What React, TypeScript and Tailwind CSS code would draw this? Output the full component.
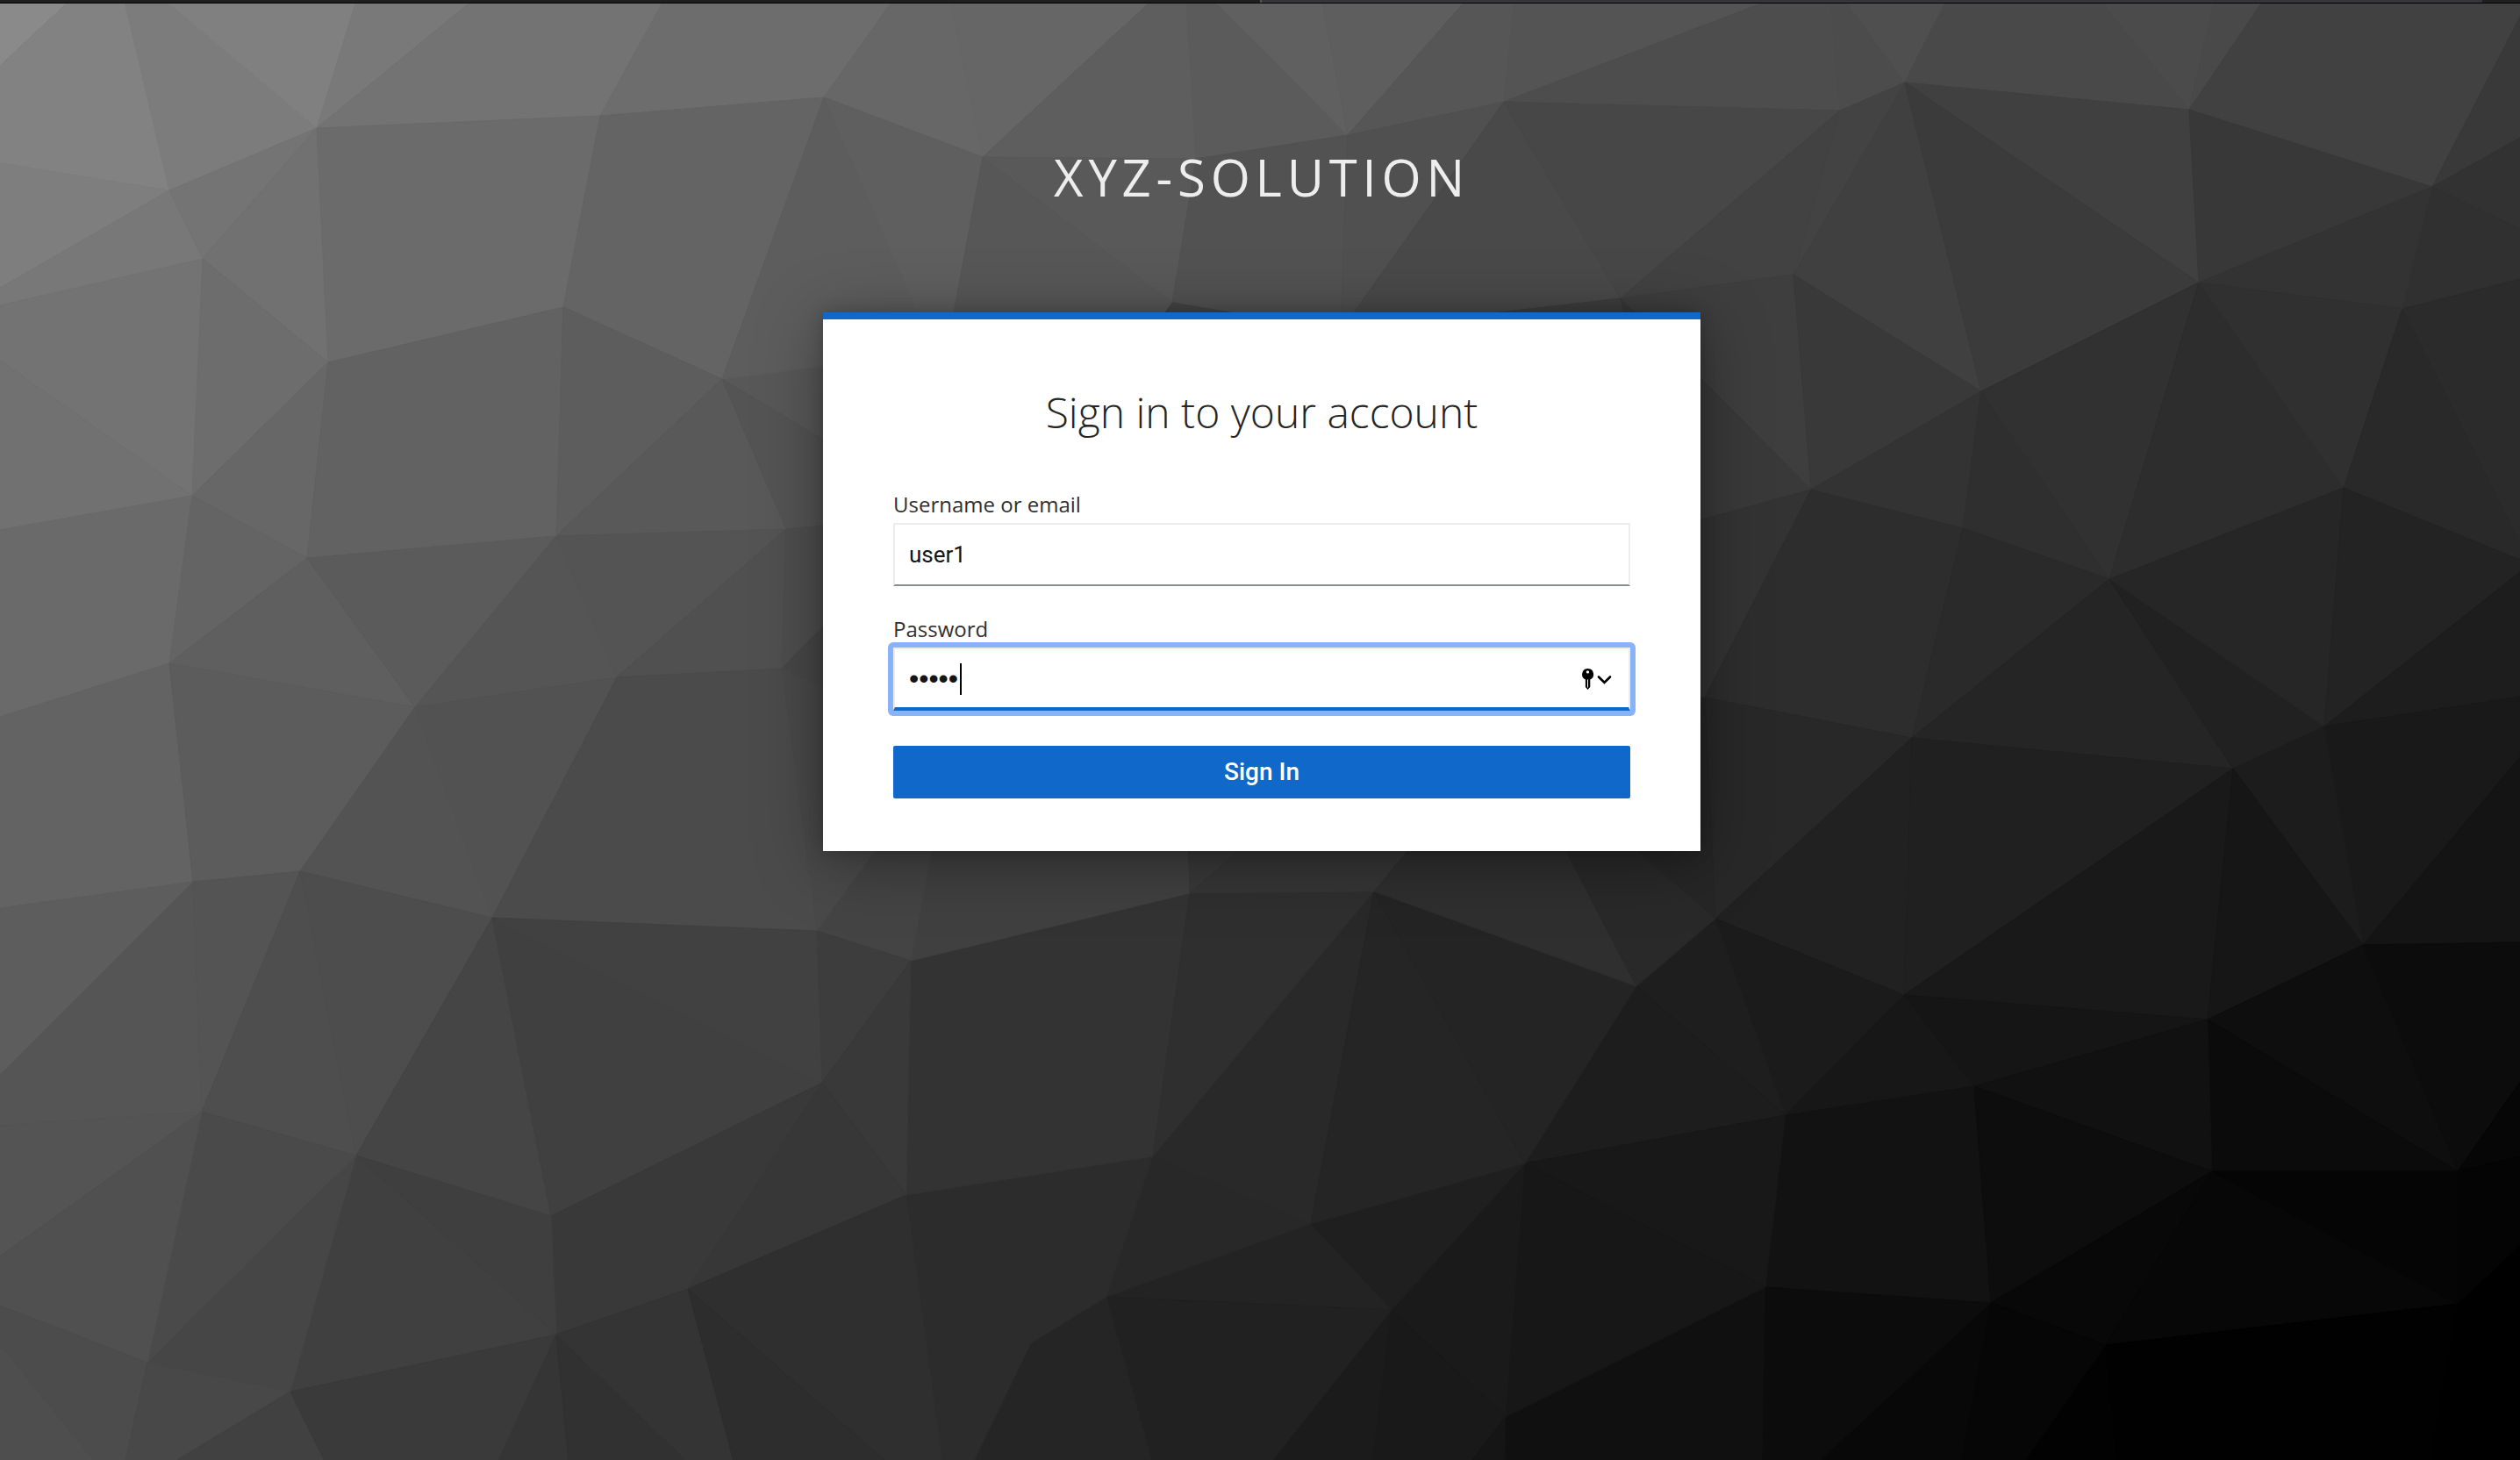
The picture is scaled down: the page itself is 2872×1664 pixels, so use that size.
import React from "react";

type Facet = [fill: string, points: string];

/* Low-poly backdrop: each facet is a flat grey polygon on a 2872 x 1664 canvas. */
const facets: Facet[] = [
  // upper left
  ["#8a8a8a", "0,0 79,0 0,74"],
  ["#828282", "79,0 142,0 193,216 0,185 0,74"],
  ["#7e7e7e", "0,185 193,216 0,327"],
  ["#787878", "0,327 193,216 231,294 0,347"],
  ["#7c7c7c", "142,0 189,0 361,145 193,216"],
  ["#808080", "189,0 406,0 361,145"],
  ["#797979", "406,0 538,0 361,145"],
  ["#737373", "538,0 756,0 684,131 361,145"],
  ["#747474", "193,216 361,145 231,294"],
  ["#717171", "361,145 374,412 231,294"],
  ["#6b6b6b", "361,145 684,131 642,349 374,412"],
  ["#6d6d6d", "756,0 1017,0 939,110 684,131"],
  ["#646464", "684,131 939,110 823,431 642,349"],
  ["#737373", "0,347 231,294 219,564 0,410"],
  ["#717171", "0,410 219,564 0,603"],
  ["#6d6d6d", "231,294 374,412 219,564"],
  ["#676767", "374,412 350,635 219,564"],
  ["#626262", "374,412 642,349 634,610 350,635"],
  ["#5d5d5d", "642,349 823,431 634,610"],
  ["#595959", "823,431 896,602 634,610"],
  ["#6a6a6a", "0,603 219,564 193,755 0,816"],
  ["#646464", "219,564 350,635 193,755"],
  ["#5f5f5f", "350,635 473,805 193,755"],
  ["#5b5b5b", "350,635 634,610 473,805"],
  ["#555555", "634,610 703,771 473,805"],
  ["#545454", "634,610 896,602 703,771"],
  ["#505050", "896,602 891,761 703,771"],
  ["#585858", "823,431 980,396 980,525"],
  ["#545454", "823,431 980,525 980,594 896,602"],
  ["#4e4e4e", "896,602 980,594 980,670 891,761"],
  ["#474747", "891,761 980,670 980,800"],
  // upper middle
  ["#676767", "1017,0 1084,0 1120,178 939,110"],
  ["#666666", "1084,0 1312,0 1120,178"],
  ["#5e5e5e", "1312,0 1352,0 1363,180 1120,178"],
  ["#5b5b5b", "1352,0 1384,0 1536,153 1363,180"],
  ["#606060", "1384,0 1507,0 1536,153"],
  ["#5e5e5e", "1507,0 1670,0 1536,153"],
  ["#565656", "1670,0 1726,0 1714,115 1536,153"],
  ["#545454", "1726,0 2015,0 1714,115"],
  ["#5d5d5d", "939,110 1065,400 823,431"],
  ["#5f5f5f", "939,110 1120,178 1075,420 1065,400"],
  ["#575757", "1120,178 1336,344 1280,420 1075,420"],
  ["#595959", "1120,178 1363,180 1336,344"],
  ["#525252", "1363,180 1536,153 1528,376 1336,344"],
  ["#505050", "1536,153 1714,115 1528,376"],
  ["#494949", "1714,115 1847,339 1528,376"],
  ["#454545", "1336,344 1528,376 1300,400"],
  ["#3e3e3e", "1847,339 1900,602 1528,376"],
  // upper right
  ["#4d4d4d", "2015,0 2087,0 2097,125 1714,115"],
  ["#4c4c4c", "2087,0 2103,0 2171,93 2097,125"],
  ["#4f4f4f", "2103,0 2218,0 2171,93"],
  ["#494949", "2218,0 2394,0 2495,124 2171,93"],
  ["#4b4b4b", "2394,0 2524,0 2495,124"],
  ["#494949", "2524,0 2579,0 2495,124"],
  ["#414141", "2579,0 2872,0 2872,18 2772,212 2495,124"],
  ["#393939", "2872,18 2872,156 2772,212"],
  ["#323232", "2872,156 2872,260 2772,212"],
  ["#303030", "2772,212 2872,260 2872,317 2738,351"],
  ["#404040", "2171,93 2495,124 2506,321"],
  ["#383838", "2495,124 2772,212 2506,321"],
  ["#333333", "2772,212 2738,351 2506,321"],
  ["#434343", "2097,125 2171,93 2044,312"],
  ["#474747", "1714,115 2097,125 1847,339"],
  ["#424242", "2097,125 2044,312 1847,339"],
  ["#404040", "2171,93 2258,445 2044,312"],
  ["#3b3b3b", "2171,93 2506,321 2258,445"],
  ["#3e3e3e", "1847,339 2044,312 2064,557"],
  ["#393939", "2044,312 2258,445 2064,557"],
  ["#393939", "1847,339 2064,557 1900,602"],
  ["#333333", "2258,445 2237,601 2064,557"],
  ["#2f2f2f", "2258,445 2404,659 2237,601"],
  ["#313131", "2258,445 2506,321 2404,659"],
  ["#2d2d2d", "2506,321 2671,555 2404,659"],
  ["#303030", "2506,321 2738,351 2671,555"],
  ["#292929", "2738,351 2872,617 2872,637 2671,555"],
  ["#2b2b2b", "2738,351 2872,317 2872,617"],
  ["#333333", "2064,557 1943,794 1900,794 1900,602"],
  ["#2d2d2d", "2064,557 2237,601 2179,840 1943,794"],
  ["#2a2a2a", "2237,601 2404,659 2179,840"],
  ["#252525", "2404,659 2545,875 2179,840"],
  ["#212121", "2404,659 2649,827 2545,875"],
  ["#262626", "2404,659 2671,555 2649,827"],
  ["#232323", "2671,555 2872,637 2872,651 2649,827"],
  ["#1d1d1d", "2872,651 2872,793 2649,827"],
  // lower right
  ["#191919", "2649,827 2872,793 2872,862 2693,1076"],
  ["#1c1c1c", "2649,827 2693,1076 2545,875"],
  ["#282828", "1943,794 2179,840 1955,1046"],
  ["#262626", "1943,794 1955,1046 1866,970 1850,794"],
  ["#212121", "2179,840 2170,1133 1955,1046"],
  ["#202020", "2179,840 2545,875 2170,1133"],
  ["#191919", "2545,875 2516,1161 2170,1133"],
  ["#161616", "2545,875 2693,1076 2516,1161"],
  ["#141414", "2872,862 2872,1073 2693,1076"],
  ["#0c0c0c", "2693,1076 2872,1073 2872,1232 2801,1334"],
  ["#0e0e0e", "2693,1076 2801,1334 2516,1161"],
  ["#0b0b0b", "2516,1161 2801,1334 2521,1334"],
  ["#1b1b1b", "1955,1046 2170,1133 2035,1270"],
  ["#1e1e1e", "1865,1123 1955,1046 2035,1270"],
  ["#1d1d1d", "1865,1123 2035,1270 1738,1325"],
  ["#171717", "2170,1133 2250,1237 2035,1270"],
  ["#151515", "2170,1133 2516,1161 2250,1237"],
  ["#111111", "2516,1161 2521,1334 2250,1237"],
  ["#121212", "2035,1270 2250,1237 2269,1484 2012,1466"],
  ["#0d0d0d", "2250,1237 2521,1334 2269,1484"],
  ["#080808", "2521,1334 2400,1532 2269,1484"],
  ["#070707", "2521,1334 2801,1485 2400,1532"],
  ["#050505", "2521,1334 2801,1334 2801,1485"],
  ["#060606", "2801,1334 2872,1232 2872,1317"],
  ["#040404", "2801,1334 2872,1317 2872,1418 2801,1485"],
  ["#010101", "2801,1485 2770,1664 2413,1664 2400,1532"],
  ["#020202", "2400,1532 2413,1664 2308,1664"],
  ["#060606", "2269,1484 2400,1532 2308,1664 2235,1664"],
  ["#080808", "2269,1484 2235,1664 2074,1664"],
  ["#0c0c0c", "2012,1466 2269,1484 2074,1664 2008,1664"],
  ["#101010", "2012,1466 2008,1664 1715,1664 1716,1614"],
  // lower middle
  ["#181818", "1738,1325 2035,1270 2012,1466"],
  ["#171717", "1738,1325 2012,1466 1716,1614"],
  ["#1a1a1a", "1738,1325 1716,1614 1586,1492"],
  ["#191919", "1586,1492 1716,1614 1677,1664 1564,1664"],
  ["#151515", "1716,1614 1715,1664 1677,1664"],
  ["#1b1b1b", "1586,1492 1564,1664 1450,1664"],
  ["#1f1f1f", "1494,1394 1738,1325 1586,1492"],
  ["#232323", "1494,1394 1586,1492 1261,1477"],
  ["#212121", "1261,1477 1586,1492 1450,1664 1313,1664"],
  ["#252525", "1261,1477 1313,1664 1110,1664 1175,1530"],
  ["#282828", "1314,1317 1494,1394 1261,1477"],
  ["#292929", "1314,1317 1566,1015 1494,1394"],
  ["#252525", "1566,1015 1738,1325 1494,1394"],
  ["#242424", "1566,1015 1865,1123 1738,1325"],
  ["#2c2c2c", "1033,1361 1314,1317 1261,1477 1175,1530 1110,1664 1074,1664"],
  ["#333333", "1038,1094 1356,1017 1314,1317 1033,1361"],
  ["#2f2f2f", "1356,1017 1566,1015 1314,1317"],
  ["#404040", "1038,1094 1063,940 1354,940 1356,1017"],
  ["#393939", "1356,1017 1354,940 1445,940"],
  ["#363636", "1356,1017 1445,940 1628,940 1566,1015"],
  ["#2f2f2f", "1566,1015 1628,940 1770,940 1865,1123"],
  ["#292929", "1865,1123 1770,940 1832,940 1955,1046"],
  ["#444444", "931,1060 1018,940 1067,940 1038,1094"],
  // lower left
  ["#494949", "891,761 980,800 1018,940 931,1060"],
  ["#636363", "0,816 193,755 220,1004 0,1034"],
  ["#5c5c5c", "193,755 473,805 342,992 220,1004"],
  ["#525252", "473,805 703,771 561,1045"],
  ["#535353", "473,805 561,1045 342,992"],
  ["#4b4b4b", "703,771 891,761 931,1060 561,1045"],
  ["#5d5d5d", "0,1034 220,1004 0,1224"],
  ["#555555", "0,1224 220,1004 230,1266 0,1282"],
  ["#545454", "220,1004 342,992 230,1266"],
  ["#4e4e4e", "342,992 406,1316 230,1266"],
  ["#4d4d4d", "342,992 561,1045 406,1316"],
  ["#454545", "561,1045 628,1385 406,1316"],
  ["#404040", "561,1045 937,1233 628,1385"],
  ["#414141", "561,1045 931,1060 937,1233"],
  ["#3d3d3d", "931,1060 1038,1094 937,1233"],
  ["#393939", "937,1233 1038,1094 1033,1361"],
  ["#373737", "937,1233 1033,1361 784,1468"],
  ["#393939", "628,1385 937,1233 784,1468 634,1520"],
  ["#3f3f3f", "406,1316 628,1385 634,1520"],
  ["#404040", "406,1316 634,1520 331,1585"],
  ["#464646", "406,1316 331,1585 168,1552"],
  ["#4a4a4a", "230,1266 406,1316 168,1552"],
  ["#545454", "0,1282 230,1266 0,1431"],
  ["#505050", "0,1431 230,1266 168,1552 0,1487"],
  ["#4c4c4c", "0,1487 168,1552 143,1664 107,1664 0,1532"],
  ["#4e4e4e", "0,1532 107,1664 0,1664"],
  ["#484848", "168,1552 331,1585 200,1664 143,1664"],
  ["#414141", "331,1585 370,1664 200,1664"],
  ["#3a3a3a", "331,1585 634,1520 568,1664 370,1664"],
  ["#353535", "634,1520 648,1664 568,1664"],
  ["#313131", "634,1520 782,1664 648,1664"],
  ["#343434", "634,1520 784,1468 836,1664 782,1664"],
  ["#2f2f2f", "784,1468 1033,1361 1074,1664 1009,1664"],
  ["#2d2d2d", "784,1468 1009,1664 836,1664"],
];

function Backdrop() {
  return (
    <svg
      aria-hidden="true"
      className="absolute inset-0 -z-10 h-full w-full"
      viewBox="0 -1 2872 1664"
      preserveAspectRatio="xMidYMid slice"
    >
      {facets.map(([fill, points]) => (
        <polygon key={points} points={points} fill={fill} stroke={fill} strokeWidth="1" />
      ))}
    </svg>
  );
}

function KeyIcon() {
  return (
    <svg aria-hidden="true" viewBox="0 0 36 28" className="h-7 w-9" fill="none">
      <path
        fillRule="evenodd"
        fill="#000"
        d="M7.5 2a6.5 6.5 0 0 1 2.800 12.400V23l-2.800 3-2.600-3v-8.600A6.500 6.500 0 0 1 7.500 2Zm0 2.200a1.700 1.700 0 1 0 0 3.400 1.700 1.700 0 0 0 0-3.400ZM7 14.500v9h1v-9Z"
      />
      <path d="m20 11.500 6.500 6.500 6.500-6.500" stroke="#000" strokeWidth="2.600" strokeLinecap="round" />
    </svg>
  );
}

const labelClass = "block text-[24px] leading-[34px] text-[#303030]";

export default function App() {
  return (
    <div className="relative isolate flex min-h-screen flex-col overflow-hidden bg-black font-['Open_Sans',sans-serif]">
      <Backdrop />

      <div className="flex h-1 border-b border-black bg-[#1f1f1f]">
        <div className="flex-1" />
        <div className="w-[1393px] border-l-2 border-[#505254] bg-[#34363a]" />
        <div className="w-[43px]" />
      </div>

      <main className="flex flex-col items-center pt-[162px] pl-1">
        <h1 className="text-[58px] leading-[72px] tracking-widest text-[#ededed] uppercase">XYZ-Solution</h1>

        <section className="mt-[118px] w-full max-w-[1000px] border-t-8 border-[#1068ca] bg-white px-20 pt-[76px] pb-15 shadow-[0_12px_70px_rgba(0,0,0,0.36),0_0_16px_rgba(0,0,0,0.2)]">
          <h2 className="text-center text-[48px] leading-[60px] font-light text-[#252525]">
            Sign in to your account
          </h2>

          <form className="mt-[58px]" onSubmit={(e) => e.preventDefault()}>
            <label htmlFor="username" className={labelClass}>
              Username or email
            </label>
            <input
              id="username"
              name="username"
              type="text"
              defaultValue="user1"
              className="mt-1 block h-18 w-full border-2 border-[#ededed] border-b-[#8a8d90] bg-white px-4 font-['Roboto',sans-serif] text-[26px] text-[#151515] outline-none"
            />

            <label htmlFor="password" className={`${labelClass} mt-8`}>
              Password
            </label>
            <div className="relative -mx-1.5 -mt-0.5 rounded-md bg-[#89b3f8] p-1.5">
              <input
                id="password"
                name="password"
                type="password"
                defaultValue="12345"
                className="block h-18 w-full border-2 border-b-4 border-[#ededed] border-b-[#1068ca] bg-white pr-16 pl-4 font-['Liberation_Sans',sans-serif] text-[32px] text-[#151515] caret-transparent outline-none"
              />
              <span aria-hidden="true" className="absolute top-6 left-[82px] h-9 w-0.5 bg-black" />
              <button
                type="button"
                aria-label="Saved passwords"
                className="absolute top-7 right-[26px]"
              >
                <KeyIcon />
              </button>
            </div>

            <button
              type="submit"
              className="mt-[34px] block h-15 w-full rounded-xs bg-[#1068ca] font-['Roboto',sans-serif] text-[28px] font-medium text-white"
            >
              Sign In
            </button>
          </form>
        </section>
      </main>
    </div>
  );
}
